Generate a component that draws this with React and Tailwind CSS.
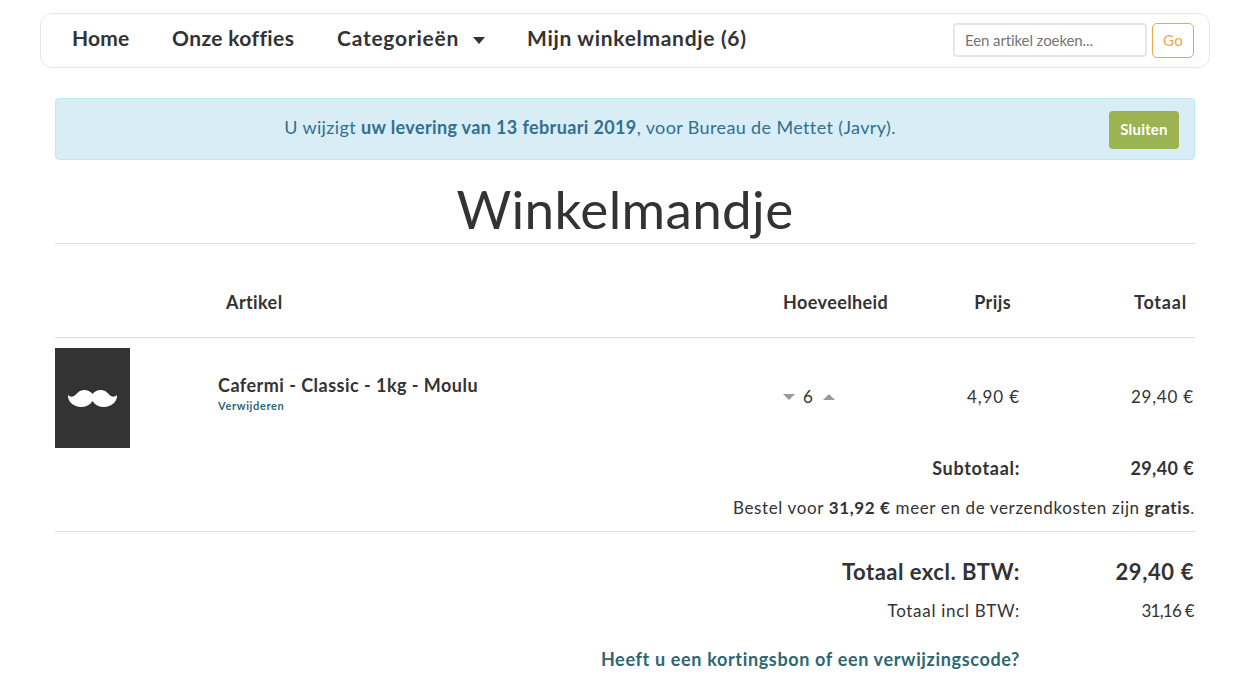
import React from 'react'

const Mustache = () => (
    <svg viewBox="0 0 49 17" className="w-[49px] h-[17px]" fill="#ffffff">
        <path d="M0 5 C2 7 4 7 6 6 C9 4 11 0 16 0 C20 0 23 2 24.5 4 C26 2 29 0 33 0 C38 0 40 4 43 6 C45 7 47 7 49 5 C49.5 11 44 17 36 17 C31 17 27 15 24.5 11 C22 15 18 17 13 17 C5 17 -0.5 11 0 5 Z" />
    </svg>
)

const App = () => {
    return (
        <div className="h-[692px] overflow-hidden bg-white text-[#333333] font-['Lato',sans-serif]">
            {/* Navbar */}
            <div className="pt-[13px] pl-10 pr-[25px]">
                <nav className="h-[55px] flex items-center justify-between border border-[#e7e7e7] rounded-[12px] pl-[31px] pr-[15px]">
                    <ul className="flex items-center text-[21px] font-bold -mt-[5px]">
                        <li className="w-[100px] tracking-[0.2px]">Home</li>
                        <li className="w-[165px] tracking-[0.38px]">Onze koffies</li>
                        <li className="w-[191px] flex items-center tracking-[0.75px]">
                            Categorieën
                            <span className="ml-[14px] mt-[4px] w-0 h-0 border-x-[6px] border-x-transparent border-t-[7px] border-t-[#333333]"></span>
                        </li>
                        <li className="-ml-px tracking-[0.68px]">Mijn winkelmandje (6)</li>
                    </ul>
                    <div className="flex items-start gap-[5px]">
                        <input
                            type="text"
                            placeholder="Een artikel zoeken..."
                            className="w-[194px] h-[34px] border-2 border-[#e6e6e6] rounded-[4px] px-[10px] text-[15px] tracking-[-0.1px] placeholder:text-[#757575] outline-none"
                        />
                        <button type="button" className="w-[42px] h-[35px] border border-[#e9a94b] rounded-[5px] text-[15px] tracking-[0.3px] text-[#e9a94b]">
                            Go
                        </button>
                    </div>
                </nav>
            </div>

            <div className="ml-[55px] mr-[40px]">
                {/* Alert */}
                <div className="mt-[30px] h-[62px] flex items-center bg-[#d9edf7] border border-[#bce8f1] rounded-[4px] pr-[15px] text-[#31708f]">
                    <p className="flex-1 pl-[15px] pb-[4px] text-center text-[18px] tracking-[0.37px]">
                        U wijzigt <strong className="font-bold">uw levering van 13 februari 2019</strong>, voor Bureau de Mettet (Javry).
                    </p>
                    <button type="button" className="w-[70px] h-[38px] mt-[1px] bg-[#9bb350] rounded-[4px] text-white text-[15px] tracking-[0.2px] font-bold">
                        Sluiten
                    </button>
                </div>

                {/* Title */}
                <h1 className="mt-[17px] h-[67px] border-b border-[#dddddd] text-center text-[53px] leading-[64px] tracking-[0.35px]">
                    Winkelmandje
                </h1>

                {/* Table header */}
                <div className="h-[94px] grid grid-cols-[163px_565px_237px_175px] items-center border-b border-[#dddddd] pt-[24px] text-[18px] font-bold tracking-[0.4px]">
                    <div></div>
                    <div className="pl-[8px]">Artikel</div>
                    <div className="flex justify-between pr-[9px]">
                        <span>Hoeveelheid</span>
                        <span>Prijs</span>
                    </div>
                    <div className="text-right pr-[8px] tracking-[0.8px]">Totaal</div>
                </div>

                {/* Item row */}
                <div className="mt-[10px] h-[100px] grid grid-cols-[163px_565px_237px_175px] items-center">
                    <div className="w-[75px] h-[100px] bg-[#333333] flex items-center justify-center">
                        <Mustache />
                    </div>
                    <div className="-mt-[10px]">
                        <div className="text-[18px] leading-[22px] font-bold tracking-[0.47px]">Cafermi - Classic - 1kg - Moulu</div>
                        <a href="#" className="block mt-[3px] text-[11px] leading-[13px] font-bold text-[#2f6673] tracking-[0.65px]">Verwijderen</a>
                    </div>
                    <div className="flex items-center justify-between text-[17px] -mt-[3px]">
                        <div className="flex items-center">
                            <span className="w-0 h-0 border-x-[6px] border-x-transparent border-t-[6px] border-t-[#999999]"></span>
                            <span className="ml-[8px] mr-[10px]">6</span>
                            <span className="w-0 h-0 border-x-[6px] border-x-transparent border-b-[6px] border-b-[#999999]"></span>
                        </div>
                        <span className="tracking-[0.9px]">4,90 €</span>
                    </div>
                    <div className="text-right text-[17px] -mt-[3px] pr-px tracking-[0.8px]">29,40 €</div>
                </div>

                {/* Totals */}
                <div className="mt-[8px] h-[24px] flex justify-end items-center text-[18px] font-bold tracking-[0.7px]">
                    <span>Subtotaal:</span>
                    <span className="w-[175px] pr-px text-right tracking-[0.4px]">29,40 €</span>
                </div>
                <p className="mt-[15px] h-[24px] text-right text-[17px] tracking-[0.63px]">
                    Bestel voor <strong>31,92 €</strong> meer en de verzendkosten zijn <strong>gratis</strong>.
                </p>
                <div className="mt-[12px] border-t border-[#dddddd]"></div>

                <div className="mt-[25px] h-[28px] flex justify-end items-center text-[22px] font-bold tracking-[0.5px]">
                    <span>Totaal excl. BTW:</span>
                    <span className="w-[175px] pr-px text-right tracking-[0.6px]">29,40 €</span>
                </div>
                <div className="mt-[14px] h-[24px] flex justify-end items-center text-[17px] tracking-[0.7px]">
                    <span>Totaal incl BTW:</span>
                    <span className="w-[175px] pr-px text-right tracking-[-0.7px]">31,16 €</span>
                </div>
                <div className="mt-[23px] pr-[175px] text-right text-[18px] font-bold text-[#2f6673] tracking-[0.65px]">
                    <a href="#">Heeft u een kortingsbon of een verwijzingscode?</a>
                </div>
            </div>
        </div>
    )
}

export default App
